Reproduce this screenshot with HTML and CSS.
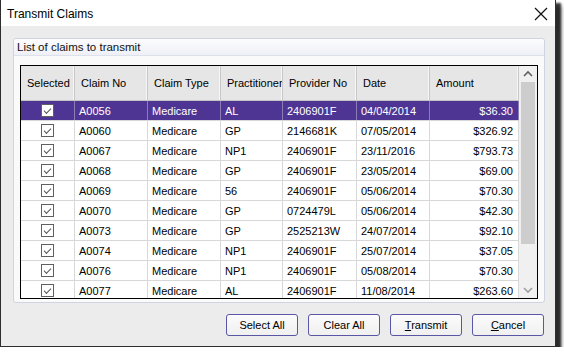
FILE: index.html
```html
<!DOCTYPE html>
<html lang="en">
<head>
    <meta charset="UTF-8">
    <link rel="stylesheet" href="styles.css">
    <title>Transmit Claims</title>
</head>
<body>
    <div class="window">
        <div class="title-bar">
            <span class="title">Transmit Claims</span>
            <svg class="close" width="14" height="14" viewBox="0 0 14 14">
                <path d="M1 1 L13 13 M13 1 L1 13" stroke="#111" stroke-width="1.2" fill="none"/>
            </svg>
        </div>
        <div class="dialog-body">
            <div class="group">
                <div class="group-header">List of claims to transmit</div>
                <div class="group-content">
                    <div class="grid-box">
                        <div class="grid">
                            <div class="grid-row header-row">
                                <div class="cell">Selected</div>
                                <div class="cell">Claim No</div>
                                <div class="cell">Claim Type</div>
                                <div class="cell">Practitioner</div>
                                <div class="cell">Provider No</div>
                                <div class="cell">Date</div>
                                <div class="cell">Amount</div>
                            </div>
                            <div class="grid-row selected">
                                <div class="cell check-cell"><span class="check"></span></div>
                                <div class="cell">A0056</div><div class="cell">Medicare</div><div class="cell">AL</div>
                                <div class="cell">2406901F</div><div class="cell">04/04/2014</div><div class="cell amount">$36.30</div>
                            </div>
                            <div class="grid-row">
                                <div class="cell check-cell"><span class="check"></span></div>
                                <div class="cell">A0060</div><div class="cell">Medicare</div><div class="cell">GP</div>
                                <div class="cell">2146681K</div><div class="cell">07/05/2014</div><div class="cell amount">$326.92</div>
                            </div>
                            <div class="grid-row">
                                <div class="cell check-cell"><span class="check"></span></div>
                                <div class="cell">A0067</div><div class="cell">Medicare</div><div class="cell">NP1</div>
                                <div class="cell">2406901F</div><div class="cell">23/11/2016</div><div class="cell amount">$793.73</div>
                            </div>
                            <div class="grid-row">
                                <div class="cell check-cell"><span class="check"></span></div>
                                <div class="cell">A0068</div><div class="cell">Medicare</div><div class="cell">GP</div>
                                <div class="cell">2406901F</div><div class="cell">23/05/2014</div><div class="cell amount">$69.00</div>
                            </div>
                            <div class="grid-row">
                                <div class="cell check-cell"><span class="check"></span></div>
                                <div class="cell">A0069</div><div class="cell">Medicare</div><div class="cell">56</div>
                                <div class="cell">2406901F</div><div class="cell">05/06/2014</div><div class="cell amount">$70.30</div>
                            </div>
                            <div class="grid-row">
                                <div class="cell check-cell"><span class="check"></span></div>
                                <div class="cell">A0070</div><div class="cell">Medicare</div><div class="cell">GP</div>
                                <div class="cell">0724479L</div><div class="cell">05/06/2014</div><div class="cell amount">$42.30</div>
                            </div>
                            <div class="grid-row">
                                <div class="cell check-cell"><span class="check"></span></div>
                                <div class="cell">A0073</div><div class="cell">Medicare</div><div class="cell">GP</div>
                                <div class="cell">2525213W</div><div class="cell">24/07/2014</div><div class="cell amount">$92.10</div>
                            </div>
                            <div class="grid-row">
                                <div class="cell check-cell"><span class="check"></span></div>
                                <div class="cell">A0074</div><div class="cell">Medicare</div><div class="cell">NP1</div>
                                <div class="cell">2406901F</div><div class="cell">25/07/2014</div><div class="cell amount">$37.05</div>
                            </div>
                            <div class="grid-row">
                                <div class="cell check-cell"><span class="check"></span></div>
                                <div class="cell">A0076</div><div class="cell">Medicare</div><div class="cell">NP1</div>
                                <div class="cell">2406901F</div><div class="cell">05/08/2014</div><div class="cell amount">$70.30</div>
                            </div>
                            <div class="grid-row">
                                <div class="cell check-cell"><span class="check"></span></div>
                                <div class="cell">A0077</div><div class="cell">Medicare</div><div class="cell">AL</div>
                                <div class="cell">2406901F</div><div class="cell">11/08/2014</div><div class="cell amount">$263.60</div>
                            </div>
                        </div>
                        <div class="scrollbar">
                            <svg class="arrow" width="18" height="16" viewBox="0 0 18 16">
                                <path d="M5 10 L9 6 L13 10" stroke="#606060" stroke-width="1.6" fill="none"/>
                            </svg>
                            <div class="track">
                                <div class="thumb"></div>
                            </div>
                            <svg class="arrow" width="18" height="16" viewBox="0 0 18 16">
                                <path d="M5 6 L9 10 L13 6" stroke="#a0a0a0" stroke-width="1.6" fill="none"/>
                            </svg>
                        </div>
                    </div>
                </div>
            </div>
            <div class="buttons">
                <button>Select All</button>
                <button>Clear All</button>
                <button><u>T</u>ransmit</button>
                <button><u>C</u>ancel</button>
            </div>
        </div>
    </div>
</body>
</html>
```

FILE: styles.css
```css
body {
    margin: 0;
    padding: 0;
    background-color: #ffffff;
    font-family: "Liberation Sans", Arial, sans-serif;
}

/* Dialog window with its drop shadow */
.window {
    width: 554px;
    height: 346px;
    border: 1px solid #2e2e2e;
    border-top: none;
    background-color: #ececec;
    box-shadow: 4px 4px 2px 1px rgba(0, 0, 0, 0.75), 6px 6px 4px 0 rgba(0, 0, 0, 0.35);
    display: flex;
    flex-direction: column;
}

.title-bar {
    height: 26px;
    background-color: #ffffff;
    display: flex;
    align-items: center;
    justify-content: space-between;
    padding: 0 7px 0 6px;
}

.title {
    font-size: 12px;
    color: #000;
    margin-top: 2px;
}

.close {
    margin-top: 1px;
}

.dialog-body {
    flex: 1;
    padding: 12px 11px 0 12px;
    display: flex;
    flex-direction: column;
}

/* Group box */
.group {
    width: 530px;
    height: 263px;
    border: 1px solid #cfd4e2;
    border-radius: 3px;
    background-color: #fafafa;
    display: flex;
    flex-direction: column;
}

.group-header {
    height: 16px;
    line-height: 16px;
    padding-left: 3px;
    font-size: 11.5px;
    color: #111;
    background: linear-gradient(#fdfdff, #eef0f6);
    border-bottom: 1px solid #dde1ec;
    border-radius: 3px 3px 0 0;
}

.group-content {
    padding: 9px 6px 0 6px;
}

/* Data grid */
.grid-box {
    height: 232px;
    border: 1px solid #000;
    background-color: #ffffff;
    display: flex;
    overflow: hidden;
}

.grid {
    width: 498px;
    overflow: hidden;
    font-size: 11px;
}

.grid-row {
    display: grid;
    grid-template-columns: 54px 73px 73px 62px 74px 73px 89px;
    height: 20px;
    border-bottom: 1px solid #d8d8d8;
    box-sizing: border-box;
    color: #000;
}

.cell {
    display: flex;
    align-items: center;
    padding: 0 4px;
    border-right: 1px solid #d8d8d8;
    white-space: nowrap;
    overflow: hidden;
}

.header-row {
    height: 35px;
    background-color: #e6e6e6;
    border-bottom: 1px solid #c4c4c4;
}

.header-row .cell {
    padding: 0 6px;
    border-right: 1px solid #c8c8c8;
    box-shadow: inset -1px 0 0 #f6f6f6;
}

.grid-row.selected {
    background-color: #4f3593;
    color: #ffffff;
}

.grid-row.selected .cell {
    border-right-color: #8b7db8;
}

.amount {
    justify-content: flex-end;
    padding-right: 5px;
}

.check-cell {
    justify-content: center;
}

.check {
    width: 11px;
    height: 11px;
    border: 1px solid #5f5f5f;
    background-color: #ffffff;
    position: relative;
}

.check::after {
    content: "";
    position: absolute;
    left: 2px;
    top: 1px;
    width: 6px;
    height: 3px;
    border-left: 1px solid #555;
    border-bottom: 1px solid #555;
    transform: translate(0, 2px) rotate(-45deg);
}

/* Scrollbar */
.scrollbar {
    width: 18px;
    background-color: #f0f0f0;
    display: flex;
    flex-direction: column;
}

.arrow {
    flex: none;
}

.track {
    flex: 1;
    padding: 0 2px;
}

.thumb {
    height: 162px;
    background-color: #cdcdcd;
}

/* Buttons */
.buttons {
    display: flex;
    justify-content: flex-end;
    gap: 10px;
    margin-top: 11px;
}

button {
    width: 72px;
    height: 22px;
    font-family: "Liberation Sans", Arial, sans-serif;
    font-size: 11px;
    color: #000;
    background: linear-gradient(#fbfbfb, #f0f0f0);
    border: 1px solid #5a56a6;
    border-radius: 3px;
    padding: 0;
}
```
